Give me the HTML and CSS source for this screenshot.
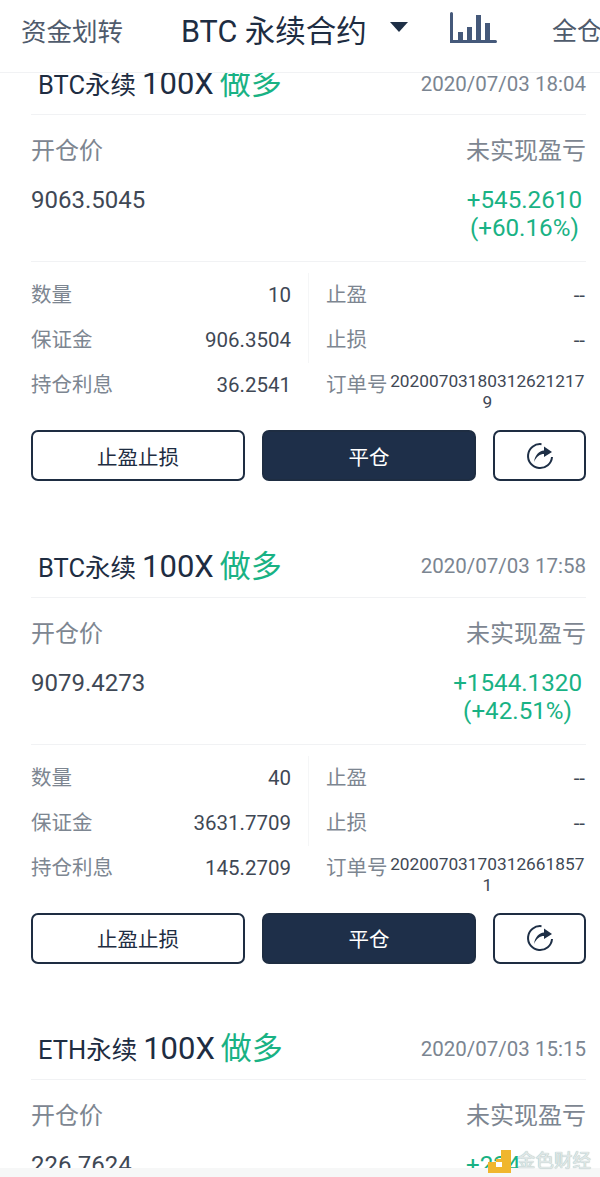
FILE: index.html
```html
<!DOCTYPE html>
<html lang="zh">
<head>
<meta charset="utf-8">
<title>持仓</title>
<link rel="stylesheet" href="styles.css">
</head>
<body>
<div class="page">
  <header class="topbar">
    <span class="transfer">资金划转</span>
    <span class="market">BTC 永续合约</span>
    <svg class="caret" width="18" height="10" viewBox="0 0 18 10"><path d="M0 0H18L9 10Z" fill="#1e2f46"/></svg>
    <svg class="chart" width="48" height="32" viewBox="0 0 48 32"><path d="M2.500 1.500V29.500H46.500" fill="none" stroke="#45597a" stroke-width="3" stroke-linecap="round"/><path d="M9 20h5v10h-5zM18 15h5v15h-5zM27 3h5v27h-5zM36 11h5v19h-5z" fill="#45597a"/></svg>
    <span class="mode">全仓</span>
  </header>
  <main class="list">
    <section class="card">
      <div class="head">
        <div class="title"><span class="sym">BTC永续</span><span class="lev">100X</span><span class="dir">做多</span></div>
        <time class="date">2020/07/03 18:04</time>
      </div>
      <div class="summary">
        <div class="col">
          <div class="lbl">开仓价</div>
          <div class="price">9063.5045</div>
        </div>
        <div class="col right">
          <div class="lbl">未实现盈亏</div>
          <div class="pnl">+545.2610<br>(+60.16%)</div>
        </div>
      </div>
      <div class="details">
        <div class="side left"><div class="row"><span>数量</span><b>10</b></div><div class="row"><span>保证金</span><b>906.3504</b></div><div class="row"><span>持仓利息</span><b>36.2541</b></div></div>
        <div class="side"><div class="row"><span>止盈</span><b>--</b></div><div class="row"><span>止损</span><b>--</b></div><div class="row order"><span>订单号</span><b>202007031803126212179</b></div></div>
      </div>
      <div class="actions">
        <button class="btn">止盈止损</button>
        <button class="btn dark">平仓</button>
        <button class="btn share"><svg width="30" height="30" viewBox="0 0 30 30"><path d="M16.500 3.200A12 12 0 1 0 27 16" fill="none" stroke="#1e2f46" stroke-width="2"/><path d="M9 21C10 14 14 10 19 9.500V5.500L27 11 19 16V13C15 13 11.500 15.500 9 21Z" fill="#1e2f46"/></svg></button>
      </div>
    </section>
    <section class="card">
      <div class="head">
        <div class="title"><span class="sym">BTC永续</span><span class="lev">100X</span><span class="dir">做多</span></div>
        <time class="date">2020/07/03 17:58</time>
      </div>
      <div class="summary">
        <div class="col">
          <div class="lbl">开仓价</div>
          <div class="price">9079.4273</div>
        </div>
        <div class="col right">
          <div class="lbl">未实现盈亏</div>
          <div class="pnl">+1544.1320<br>(+42.51%)</div>
        </div>
      </div>
      <div class="details">
        <div class="side left"><div class="row"><span>数量</span><b>40</b></div><div class="row"><span>保证金</span><b>3631.7709</b></div><div class="row"><span>持仓利息</span><b>145.2709</b></div></div>
        <div class="side"><div class="row"><span>止盈</span><b>--</b></div><div class="row"><span>止损</span><b>--</b></div><div class="row order"><span>订单号</span><b>202007031703126618571</b></div></div>
      </div>
      <div class="actions">
        <button class="btn">止盈止损</button>
        <button class="btn dark">平仓</button>
        <button class="btn share"><svg width="30" height="30" viewBox="0 0 30 30"><path d="M16.500 3.200A12 12 0 1 0 27 16" fill="none" stroke="#1e2f46" stroke-width="2"/><path d="M9 21C10 14 14 10 19 9.500V5.500L27 11 19 16V13C15 13 11.500 15.500 9 21Z" fill="#1e2f46"/></svg></button>
      </div>
    </section>
    <section class="card">
      <div class="head">
        <div class="title"><span class="sym">ETH永续</span><span class="lev">100X</span><span class="dir">做多</span></div>
        <time class="date">2020/07/03 15:15</time>
      </div>
      <div class="summary">
        <div class="col">
          <div class="lbl">开仓价</div>
          <div class="price">226.7624</div>
        </div>
        <div class="col right">
          <div class="lbl">未实现盈亏</div>
          <div class="pnl partial">+224</div>
        </div>
      </div>
    </section>
  </main>
  <div class="bottom"></div>
  <div class="mark">
    <svg width="23" height="23" viewBox="0 0 23 23"><path d="M0 12H8V9H13V0H23V23H0Z" fill="#f0b62e"/><path d="M8 12H14V17H8Z" fill="#fff"/></svg>
    <span>金色财经</span>
  </div>
</div>
</body>
</html>
```
FILE: styles.css
```css
* { box-sizing: border-box; }
html, body { margin: 0; padding: 0; background: #fff; }
body { font-family: Roboto, "Noto Sans CJK SC", sans-serif; }
.page { position: relative; width: 600px; height: 1177px; overflow: hidden; background: #fff; }
.topbar { position: relative; z-index: 2; display: flex; align-items: center; height: 73px; padding: 0 0 14px 21px; background: #fff; border-bottom: 1px solid #f1f2f4; white-space: nowrap; }
.transfer { font-size: 25.500px; color: #4f5b6c; width: 160px; flex: none; }
.market { font-size: 30.500px; color: #1e2d42; width: 210px; flex: none; }
.caret { flex: none; margin: -4px 0 0 -1px; }
.chart { flex: none; margin: -3px 0 0 41px; }
.mode { flex: none; margin-left: 55px; font-size: 25px; color: #4f5b6c; }
.list { margin-top: -18px; padding: 0 14px 0 31px; }
.card { height: 482.500px; }
.head { display: flex; justify-content: space-between; align-items: center; height: 60px; padding-bottom: 2px; border-bottom: 1px solid #f1f2f4; }
.title { display: flex; align-items: baseline; margin-top: -6px; padding-left: 7px; color: #1e2d42; white-space: nowrap; }
.sym { font-size: 25.500px; }
.lev { font-size: 31px; margin-left: 6px; }
.dir { font-size: 31px; margin-left: 6px; color: #19b284; }
.date { font-size: 20.500px; color: #7b8591; }
.summary { display: flex; justify-content: space-between; height: 147px; border-bottom: 1px solid #f1f2f4; padding-top: 19px; }
.lbl { font-size: 24px; line-height: 34px; color: #7d8691; }
.price { font-size: 24px; line-height: 28px; margin-top: 18px; color: #3f4855; }
.right { text-align: right; }
.pnl { width: max-content; margin: 18px 4px 0 auto; font-size: 24.200px; line-height: 28px; text-align: center; color: #19b284; }
.pnl.partial { width: auto; margin-left: 0; text-align: left; }
.details { display: flex; height: 168px; padding-top: 11px; }
.side { width: 259px; }
.side.left { width: 278px; padding-right: 17px; margin-right: 17px; border-right: 1px solid #f5f6f7; height: 90px; }
.row { display: flex; justify-content: space-between; align-items: flex-start; height: 45px; font-size: 20.500px; line-height: 45px; color: #7d8691; white-space: nowrap; }
.row b { font-weight: 400; color: #3f4855; }
.row.order { height: auto; }
.row.order b { width: 196px; margin-left: 2px; font-size: 17.300px; line-height: 21px; padding-top: 8px; text-align: center; white-space: normal; word-break: break-all; }
.actions { display: flex; gap: 17px; height: 51px; }
.btn { display: flex; align-items: center; justify-content: center; width: 214px; height: 51px; padding: 0; font: inherit; font-size: 20.500px; color: #1e2d42; background: #fff; border: 2px solid #1e2d42; border-radius: 7px; }
.dark { background: #1e2f49; color: #fff; }
.share { width: 93px; }
.bottom { position: absolute; left: 0; right: 0; bottom: 0; height: 9px; background: #f6f7f7; z-index: 2; }
.mark { position: absolute; z-index: 3; left: 488px; top: 1150px; display: flex; align-items: center; gap: 6px; font-size: 18.500px; font-weight: 500; line-height: 23px; color: #dfe6e6; text-shadow: 0 0 1px #8fb0ae; white-space: nowrap; }
```
